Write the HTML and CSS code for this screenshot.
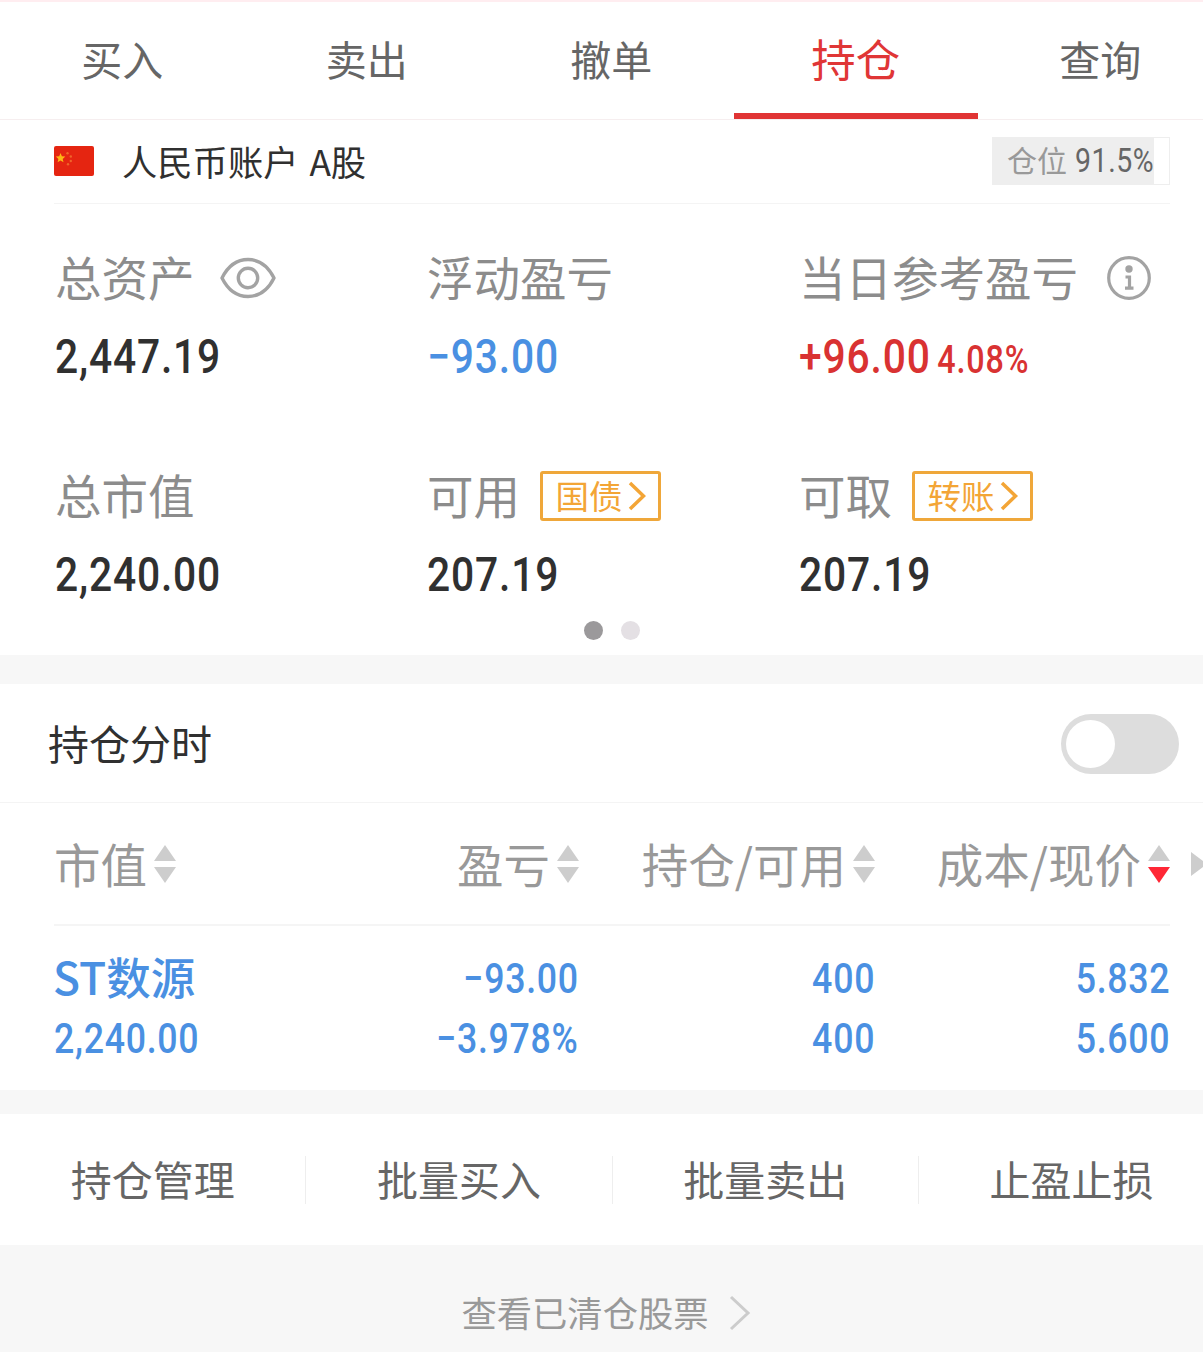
FILE: index.html
```html
<!DOCTYPE html>
<html lang="zh-CN">
<head>
  <meta charset="UTF-8">
  <meta name="viewport" content="width=device-width, initial-scale=1.0">
  <title>持仓</title>
  <link rel="stylesheet" href="styles.css">
</head>
<body>
  <!-- Tabs -->
  <nav class="tabs">
    <a class="tab">买入</a>
    <a class="tab">卖出</a>
    <a class="tab">撤单</a>
    <a class="tab active">持仓</a>
    <a class="tab">查询</a>
  </nav>

  <!-- Account -->
  <section class="account">
    <div class="account-bar">
      <svg class="flag" viewBox="0 0 40 30">
        <rect width="40" height="30" rx="2" fill="#e52511"/>
        <path d="M6.5 7l1.400 3.300 3.400.3-2.600 2.300.8 3.400-3-1.800-2.900 1.800.8-3.400-2.600-2.300 3.400-.3z" fill="#fdb515"/>
        <g fill="#f0642a">
          <circle cx="13.5" cy="7.3" r="1.2"/>
          <circle cx="16.8" cy="10.5" r="1.2"/>
          <circle cx="16.8" cy="15" r="1.2"/>
          <circle cx="14" cy="18.2" r="1.2"/>
        </g>
      </svg>
      <span class="account-name">人民币账户 A股</span>
      <div class="position"><span>仓位</span><b class="num">91.5%</b></div>
    </div>

    <div class="assets">
      <div class="asset">
        <div class="label">总资产
          <svg class="eye" viewBox="0 0 56 42" fill="none" stroke="#a3a3a3" stroke-width="3.4">
            <path d="M2 21C8 9 17 2.500 28 2.500S48 9 54 21C48 33 39 39.500 28 39.500S8 33 2 21z" stroke-linejoin="round"/>
            <circle cx="28" cy="21" r="9.700"/>
          </svg>
        </div>
        <div class="value"><span class="num">2,447.19</span></div>
      </div>
      <div class="asset">
        <div class="label">浮动盈亏</div>
        <div class="value blue"><span class="num">−93.00</span></div>
      </div>
      <div class="asset">
        <div class="label">当日参考盈亏
          <svg class="info" viewBox="0 0 44 44">
            <circle cx="22" cy="22" r="20.300" fill="none" stroke="#a3a3a3" stroke-width="3.200"/>
            <circle cx="22" cy="13" r="3.700" fill="#a3a3a3"/>
            <path d="M18.500 21H22.500V32M18 32.200H26.500" fill="none" stroke="#a3a3a3" stroke-width="3.200"/>
          </svg>
        </div>
        <div class="value red"><span class="num">+96.00 <small>4.08%</small></span></div>
      </div>
      <div class="asset">
        <div class="label">总市值</div>
        <div class="value"><span class="num">2,240.00</span></div>
      </div>
      <div class="asset">
        <div class="label">可用
          <a class="badge"><span>国债</span><svg viewBox="0 0 18 30"><path d="M2 2L15.500 15 2 28"/></svg></a>
        </div>
        <div class="value"><span class="num">207.19</span></div>
      </div>
      <div class="asset">
        <div class="label">可取
          <a class="badge"><span>转账</span><svg viewBox="0 0 18 30"><path d="M2 2L15.500 15 2 28"/></svg></a>
        </div>
        <div class="value"><span class="num">207.19</span></div>
      </div>
    </div>
    <div class="dots"><i class="on"></i><i></i></div>
  </section>

  <!-- Holdings -->
  <section class="holdings">
    <div class="switch-row">
      <span>持仓分时</span>
      <div class="switch"></div>
    </div>
    <div class="row head">
      <div>市值<svg class="sort" viewBox="0 0 22 38"><path d="M11 0L22 16H0z"/><path d="M0 22H22L11 38z"/></svg></div>
      <div>盈亏<svg class="sort" viewBox="0 0 22 38"><path d="M11 0L22 16H0z"/><path d="M0 22H22L11 38z"/></svg></div>
      <div>持仓/可用<svg class="sort" viewBox="0 0 22 38"><path d="M11 0L22 16H0z"/><path d="M0 22H22L11 38z"/></svg></div>
      <div>成本/现价<svg class="sort" viewBox="0 0 22 38"><path d="M11 0L22 16H0z"/><path class="desc" d="M0 22H22L11 38z"/></svg></div>
      <svg class="more" viewBox="0 0 12 24"><path d="M0 0L16 12 0 24z"/></svg>
    </div>
    <div class="stock">
      <div class="row">
        <div class="name">ST数源</div>
        <div><span class="num">−93.00</span></div>
        <div><span class="num">400</span></div>
        <div><span class="num">5.832</span></div>
      </div>
      <div class="row">
        <div><span class="num">2,240.00</span></div>
        <div><span class="num">−3.978%</span></div>
        <div><span class="num">400</span></div>
        <div><span class="num">5.600</span></div>
      </div>
    </div>
  </section>

  <!-- Actions -->
  <section class="actions">
    <a>持仓管理</a>
    <a>批量买入</a>
    <a>批量卖出</a>
    <a>止盈止损</a>
  </section>

  <footer class="cleared">
    <span>查看已清仓股票</span>
    <svg viewBox="0 0 22 36"><path d="M2 2L19 18 2 34"/></svg>
  </footer>
</body>
</html>
```
FILE: styles.css
```css
* {
  box-sizing: border-box;
}
body {
  margin: 0;
  width: 1203px;
  height: 1352px;
  overflow: hidden;
  display: flex;
  flex-direction: column;
  background-color: #f7f7f7;
  color: #303030;
  font-family: "Noto Sans CJK SC", sans-serif;
  line-height: 1;
}
svg {
  display: block;
  flex: none;
}
.num {
  display: inline-block;
  font-family: Roboto, "Noto Sans CJK SC", sans-serif;
  font-weight: 500;
  letter-spacing: 0.02em;
  white-space: nowrap;
  transform: scaleX(0.85);
  transform-origin: left center;
}
.blue {
  color: #4a90e2;
}
.red {
  color: #d93232;
}

/* Tabs */
.tabs {
  display: flex;
  height: 120px;
  border-top: 2px solid #ffedf0;
  border-bottom: 1px solid #f6eeef;
  background-color: #fff;
}
.tab {
  flex: 0 0 244.5px;
  display: flex;
  align-items: center;
  justify-content: center;
  padding-top: 2px;
  border-bottom: 6px solid transparent;
  font-size: 41px;
  color: #666;
}
.tab.active {
  font-size: 44.5px;
  color: #e03636;
  border-color: #e03434;
}

/* Account */
.account {
  height: 535px;
  background-color: #fff;
}
.account-bar {
  display: flex;
  align-items: center;
  height: 84px;
  margin: 0 33px 0 54px;
  padding-bottom: 2px;
  border-bottom: 1px solid #f4f4f4;
}
.flag {
  width: 40px;
  height: 30px;
}
.account-name {
  margin-left: 28px;
  font-size: 35.3px;
  word-spacing: 3px;
}
.position {
  display: flex;
  align-items: center;
  width: 178px;
  height: 48px;
  margin-left: auto;
  padding-left: 14px;
  border: 1px solid #eee;
  background: linear-gradient(90deg, #eee 91.5%, #fff 91.5%);
  font-size: 30px;
  color: #999;
}
.position span {
  padding-bottom: 3px;
}
.position .num {
  margin-left: 8px;
  font-size: 33.5px;
  font-weight: 400;
  color: #666;
}
.assets {
  display: grid;
  grid-template-columns: repeat(3, 372px);
  grid-auto-rows: 218px;
  padding-left: 55px;
}
.asset {
  padding-top: 49px;
}
.label {
  display: flex;
  align-items: center;
  height: 50px;
  padding-bottom: 3px;
  font-size: 46.5px;
  color: #8c8c8c;
  white-space: nowrap;
}
.eye {
  width: 56px;
  height: 42px;
  margin: 3px 0 0 25px;
}
.info {
  width: 44px;
  height: 44px;
  margin: 3px 0 0 29px;
}
.badge {
  display: flex;
  align-items: center;
  justify-content: center;
  gap: 5px;
  width: 121px;
  height: 50px;
  margin: 3px 0 0 20px;
  border: 3px solid #efa73a;
  border-radius: 3px;
  font-size: 33.5px;
  color: #f3a536;
}
.badge span {
  padding-bottom: 3px;
}
.badge svg {
  width: 18px;
  height: 30px;
  fill: none;
  stroke: #f3a536;
  stroke-width: 3.5;
}
.value {
  margin-top: 24px;
  font-size: 48px;
  line-height: 50px;
}
.value small {
  margin-left: -5px;
  font-size: 38px;
}
.dots {
  display: flex;
  justify-content: center;
  gap: 18px;
  margin-top: -19px;
  padding-left: 20px;
}
.dots i {
  width: 19px;
  height: 19px;
  border-radius: 50%;
  background-color: #e4e0e4;
}
.dots .on {
  background-color: #9b999b;
}

/* Holdings */
.holdings {
  height: 406px;
  margin-top: 29px;
  background-color: #fff;
}
.switch-row {
  display: flex;
  align-items: center;
  justify-content: space-between;
  height: 119px;
  padding: 1px 24px 0 48px;
  border-bottom: 1px solid #f4f4f4;
  font-size: 41px;
}
.switch-row span {
  padding-bottom: 3px;
}
.switch {
  width: 118px;
  height: 60px;
  padding: 6px 5px;
  border-radius: 30px;
  background-color: #ddd;
}
.switch::before {
  content: "";
  display: block;
  width: 49px;
  height: 48px;
  border-radius: 50%;
  background-color: #fff;
}
.row {
  display: grid;
  grid-template-columns: 230px 295px 296px 295px;
  align-items: center;
  height: 60px;
  margin: 0 33px 0 54px;
  font-size: 42px;
}
.row > div {
  display: flex;
  align-items: center;
  justify-content: flex-end;
  white-space: nowrap;
}
.row > div:first-child {
  justify-content: flex-start;
}
.row > div:not(:first-child) .num {
  transform-origin: right center;
}
.head {
  position: relative;
  height: 123px;
  border-bottom: 2px solid #f5f5f5;
  font-size: 46.5px;
  color: #999;
}
.sort {
  width: 22px;
  height: 38px;
  margin-left: 7px;
  fill: #cdcdcd;
}
.desc {
  fill: #ff2735;
}
.more {
  position: absolute;
  right: -33px;
  width: 12px;
  height: 24px;
  fill: #cdcdcd;
}
.stock {
  padding-top: 23px;
  color: #4a90e2;
}
.row .name {
  margin-left: -1px;
  padding-bottom: 5px;
  font-size: 44.5px;
  font-weight: 500;
}

/* Actions */
.actions {
  display: flex;
  align-items: center;
  height: 131px;
  margin-top: 24px;
  background-color: #fff;
  font-size: 41px;
  color: #666;
}
.actions a {
  flex: 0 0 306.3px;
  height: 48px;
  line-height: 45px;
  text-align: center;
  border-right: 1px solid #eee;
}

.cleared {
  display: flex;
  align-items: center;
  justify-content: center;
  gap: 20px;
  height: 107px;
  padding: 29px 0 0 9px;
  font-size: 35.3px;
  color: #999;
}
.cleared span {
  padding-bottom: 3px;
}
.cleared svg {
  width: 22px;
  height: 36px;
  fill: none;
  stroke: #ccc;
  stroke-width: 3;
}
```
